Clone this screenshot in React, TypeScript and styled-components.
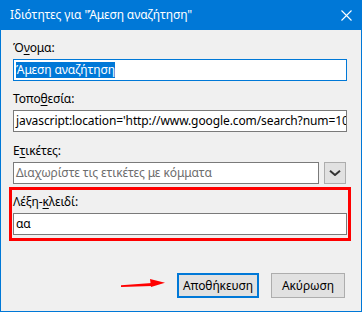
import * as React from "react"
import styled, { createGlobalStyle } from "styled-components"

const Global = createGlobalStyle({
  "html, body": { margin: 0, padding: 0, background: "#f0f0f0" },
  "*": { boxSizing: "border-box" },
})

const App: React.FC = () => {
  return (
    <>
      <Global />
      <Window>
        <TitleBar>
          <TitleText>Ιδιότητες για "Άμεση αναζήτηση"</TitleText>
          <CloseBtn>
            <svg width="11" height="11" viewBox="0 0 11 11">
              <path d="M0.5 0.5 L10.5 10.5 M10.5 0.5 L0.5 10.5" stroke="#fff" strokeWidth="1.1" />
            </svg>
          </CloseBtn>
        </TitleBar>

        <Body>
          <Label>
            Ό<u>ν</u>ομα:
          </Label>
          <Field $focused>
            <Selected>Άμεση αναζήτηση</Selected>
          </Field>

          <Label $gap={10}>
            Τοπο<u>θ</u>εσία:
          </Label>
          <Field>javascript:location='http://www.google.com/search?num=100</Field>

          <Label $gap={11}>
            Ε<u>τ</u>ικέτες:
          </Label>
          <TagRow>
            <Field $placeholder>Διαχωρίστε τις ετικέτες με κόμματα</Field>
            <DropBtn>
              <svg width="12" height="6" viewBox="0 0 12 6">
                <path d="M1 0.8 L6 5 L11 0.8" fill="none" stroke="#333" strokeWidth="2" />
              </svg>
            </DropBtn>
          </TagRow>

          <Highlight>
            <Label $gap={4}>
              Λέξη-<u>κ</u>λειδί:
            </Label>
            <Field>αα</Field>
          </Highlight>

          <Buttons>
            <Button $primary $w={82}>
              Αποθήκευση
            </Button>
            <Button $w={74}>Ακύρωση</Button>
          </Buttons>
        </Body>

        <Arrow width="48" height="12" viewBox="0 0 48 12">
          <path d="M0 7.2 L31 5 L31 8 L0 9 Z" fill="#f00" />
          <path d="M29 1 L44 4.8 L30 9 Z" fill="#f00" />
        </Arrow>
      </Window>
    </>
  )
}

export default App

/* ---------------- styles ---------------- */

const Window = styled.div({
  position: "relative",
  width: "362px",
  height: "312px",
  border: "1px solid #0078d7",
  borderTop: "none",
  background: "#f0f0f0",
  fontFamily: '"Noto Sans", "Segoe UI", sans-serif',
  fontSize: "12px",
  letterSpacing: "-0.1px",
  color: "#000",
})

const TitleBar = styled.div({
  height: "30px",
  margin: "0 -1px",
  background: "#0078d7",
  display: "flex",
  alignItems: "center",
  justifyContent: "space-between",
  padding: "0 10px 0 10px",
})

const TitleText = styled.div({
  color: "#fff",
  fontSize: "12px",
  lineHeight: "16px",
  whiteSpace: "nowrap",
})

const CloseBtn = styled.div({
  width: "11px",
  height: "11px",
  display: "flex",
})

const Body = styled.div({
  padding: "10px 14px 0 12px",
  display: "flex",
  flexDirection: "column",
})

const Label = styled.div<{ $gap?: number }>(({ $gap = 0 }) => ({
  marginTop: `${$gap}px`,
  lineHeight: "16px",
  height: "16px",
  marginBottom: "3px",
  whiteSpace: "nowrap",
  u: { textUnderlineOffset: "2px" },
}))

const Field = styled.div<{ $focused?: boolean; $placeholder?: boolean }>(
  ({ $focused, $placeholder }) => ({
    flex: 1,
    height: "22px",
    border: `1px solid ${$focused ? "#0078d7" : "#7a7a7a"}`,
    background: "#fff",
    padding: "2px 2px",
    lineHeight: "16px",
    whiteSpace: "nowrap",
    overflow: "hidden",
    color: $placeholder ? "#6d6d6d" : "#000",
  })
)

const Selected = styled.span({
  background: "#0078d7",
  color: "#fff",
  display: "inline-block",
  height: "16px",
})

const TagRow = styled.div({
  display: "flex",
  gap: "5px",
  paddingRight: "1px",
})

const DropBtn = styled.div({
  width: "22px",
  height: "22px",
  border: "1px solid #adadad",
  background: "#e1e1e1",
  display: "grid",
  placeItems: "center",
})

const Highlight = styled.div({
  margin: "3px -4px 0",
  border: "3px solid #f00",
  padding: "0 1px 3px",
  display: "flex",
  flexDirection: "column",
})

const Buttons = styled.div({
  marginTop: "32px",
  display: "flex",
  justifyContent: "flex-end",
  gap: "12px",
  paddingRight: "2px",
})

const Button = styled.div<{ $primary?: boolean; $w: number }>(({ $primary, $w }) => ({
  width: `${$w}px`,
  height: "25px",
  border: $primary ? "2px solid #0078d7" : "1px solid #adadad",
  background: "#e1e1e1",
  display: "grid",
  placeItems: "center",
  lineHeight: "16px",
}))

const Arrow = styled.svg({
  position: "absolute",
  left: "120px",
  top: "278px",
})
